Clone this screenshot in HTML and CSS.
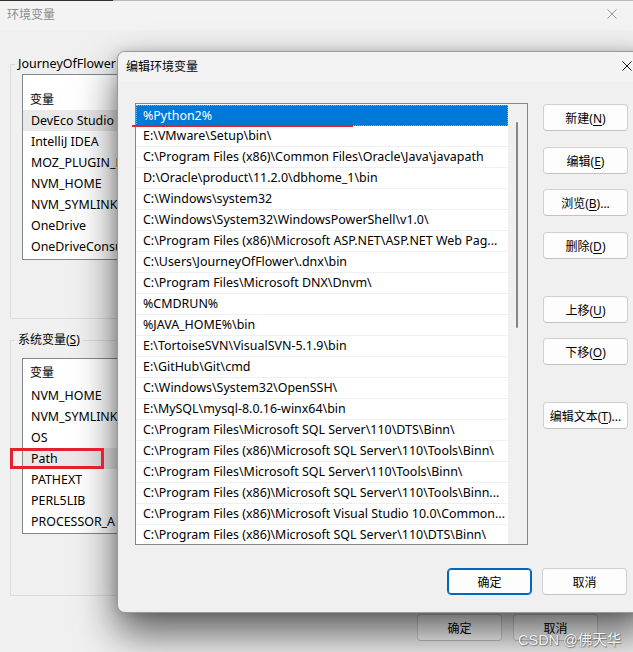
FILE: index.html
```html
<!DOCTYPE html>
<html lang="zh-CN">
<head>
<meta charset="utf-8">
<title>编辑环境变量</title>
<link rel="stylesheet" href="styles.css">
</head>
<body>
<div class="screen">
  <div class="back">
    <div class="topedge"><span class="te-dark"></span><span class="te-light"></span></div>
    <div class="back-title">
      <span class="back-title-text">环境变量</span>
      <svg class="xicon" width="10" height="10" viewBox="0 0 10 10"><path d="M0.5 0.5L9.5 9.5M9.5 0.5L0.5 9.5" stroke="#9a9a9a" stroke-width="1" fill="none"/></svg>
    </div>
    <div class="back-body">
      <fieldset class="group g-user">
        <legend class="lg-user">JourneyOfFlower</legend>
        <div class="vlist vl-user">
          <div class="vl-head vh-user">变量</div>
          <div class="vl-row hl">DevEco Studio</div>
          <div class="vl-row">IntelliJ IDEA</div>
          <div class="vl-row">MOZ_PLUGIN_P</div>
          <div class="vl-row">NVM_HOME</div>
          <div class="vl-row">NVM_SYMLINK</div>
          <div class="vl-row">OneDrive</div>
          <div class="vl-row">OneDriveConsu</div>
        </div>
      </fieldset>
      <fieldset class="group g-sys">
        <legend>系统变量(<u>S</u>)</legend>
        <div class="vlist vl-sys">
          <div class="vl-head vh-sys">变量</div>
          <div class="vl-row">NVM_HOME</div>
          <div class="vl-row">NVM_SYMLINK</div>
          <div class="vl-row">OS</div>
          <div class="vl-row hl">Path</div>
          <div class="vl-row">PATHEXT</div>
          <div class="vl-row">PERL5LIB</div>
          <div class="vl-row">PROCESSOR_A</div>
        </div>
      </fieldset>
      <div class="back-foot">
        <button class="btn bbtn-ok">确定</button>
        <button class="btn bbtn-cancel">取消</button>
      </div>
    </div>
  </div>

  <div class="dialog">
    <div class="dlg-title">
      <span>编辑环境变量</span>
      <svg class="xicon" width="10" height="10" viewBox="0 0 10 10"><path d="M0.5 0.5L9.5 9.5M9.5 0.5L0.5 9.5" stroke="#1a1a1a" stroke-width="1" fill="none"/></svg>
    </div>
    <div class="dlg-main">
      <div class="plist">
        <div class="prows">
          <div class="prow sel">%Python2%</div>
          <div class="prow">E:\VMware\Setup\bin\</div>
          <div class="prow">C:\Program Files (x86)\Common Files\Oracle\Java\javapath</div>
          <div class="prow">D:\Oracle\product\11.2.0\dbhome_1\bin</div>
          <div class="prow">C:\Windows\system32</div>
          <div class="prow">C:\Windows\System32\WindowsPowerShell\v1.0\</div>
          <div class="prow">C:\Program Files (x86)\Microsoft ASP.NET\ASP.NET Web Pag...</div>
          <div class="prow">C:\Users\JourneyOfFlower\.dnx\bin</div>
          <div class="prow">C:\Program Files\Microsoft DNX\Dnvm\</div>
          <div class="prow">%CMDRUN%</div>
          <div class="prow">%JAVA_HOME%\bin</div>
          <div class="prow">E:\TortoiseSVN\VisualSVN-5.1.9\bin</div>
          <div class="prow">E:\GitHub\Git\cmd</div>
          <div class="prow">C:\Windows\System32\OpenSSH\</div>
          <div class="prow">E:\MySQL\mysql-8.0.16-winx64\bin</div>
          <div class="prow">C:\Program Files\Microsoft SQL Server\110\DTS\Binn\</div>
          <div class="prow">C:\Program Files (x86)\Microsoft SQL Server\110\Tools\Binn\</div>
          <div class="prow">C:\Program Files\Microsoft SQL Server\110\Tools\Binn\</div>
          <div class="prow">C:\Program Files (x86)\Microsoft SQL Server\110\Tools\Binn...</div>
          <div class="prow">C:\Program Files (x86)\Microsoft Visual Studio 10.0\Common...</div>
          <div class="prow">C:\Program Files (x86)\Microsoft SQL Server\110\DTS\Binn\</div>
        </div>
        <div class="pscroll"><div class="thumb"></div></div>
      </div>
      <div class="btncol">
        <button class="btn b-new">新建(<u>N</u>)</button>
        <button class="btn b-edit">编辑(<u>E</u>)</button>
        <button class="btn b-browse">浏览(<u>B</u>)...</button>
        <button class="btn b-del">删除(<u>D</u>)</button>
        <button class="btn b-up">上移(<u>U</u>)</button>
        <button class="btn b-down">下移(<u>O</u>)</button>
        <button class="btn b-text">编辑文本(<u>T</u>)...</button>
      </div>
    </div>
    <div class="dlg-foot">
      <button class="btn primary">确定</button>
      <button class="btn">取消</button>
    </div>
  </div>

  <div class="mark-line"></div>
  <div class="mark-box"></div>
  <div class="watermark">CSDN @佛天华</div>
</div>
</body>
</html>
```
FILE: styles.css
```css
* { box-sizing: border-box; }
html, body { margin: 0; padding: 0; }
body {
  width: 633px;
  height: 652px;
  overflow: hidden;
  background: #f0f0f0;
  font-family: "Noto Sans", "Noto Sans CJK SC", sans-serif;
  font-size: 12px;
  color: #000;
}
.screen { position: relative; width: 633px; height: 652px; overflow: hidden; }

/* back window */
.back { width: 633px; height: 652px; background: #f0f0f0; }
.topedge { display: flex; height: 1px; }
.te-dark { width: 113px; background: #2e2e2e; }
.te-light { flex: 1; background: #b8b8b8; }
.back-title {
  height: 29px;
  background: #f3f3f3;
  display: flex;
  align-items: center;
  justify-content: space-between;
  padding: 0 16px 3px 7px;
  color: #8c8c8c;
}
.back-body { padding: 26px 0 0 10px; }
.group { margin: 0; padding: 0; border: 1px solid #dcdcdc; width: 620px; min-width: 0; }
.group legend { margin-left: 4px; padding: 0 3px; line-height: 16px; font-size: 12px; }
.group legend.lg-user { font-size: 12.5px; }
.g-sys { margin-top: 13px; }
.vlist { background: #fff; border: 1px solid #828790; width: 110px; }
.vl-user { height: 186px; margin: 2px 0 58px 11px; }
.vl-sys { height: 176px; margin: 10px 0 61px 11px; }
.vl-head { padding-left: 7px; line-height: 21px; }
.vh-user { padding-top: 14px; }
.vh-sys { padding-top: 3px; padding-bottom: 2px; }
.vl-row { height: 21px; line-height: 21px; padding-left: 8px; white-space: nowrap; font-size: 12.4px; }
.vl-row.hl { background: #e9e9e9; }
.back-foot { display: flex; gap: 11px; padding-left: 407px; margin-top: 18px; }
.bbtn-cancel { width: 84px; }

/* dialog */
.dialog {
  position: absolute;
  left: 117px;
  top: 51px;
  width: 533px;
  height: 562px;
  background: #f0f0f0;
  border: 1px solid #999;
  border-radius: 8px;
  box-shadow: 0 20px 40px rgba(0, 0, 0, 0.62), 0 0 12px rgba(0, 0, 0, 0.15);
  overflow: hidden;
}
.dlg-title {
  height: 29px;
  background: #f3f3f3;
  display: flex;
  align-items: center;
  justify-content: space-between;
  padding: 0 17px 1px 8px;
}
.dlg-main { display: flex; padding: 22px 0 0 17px; }
.plist { width: 393px; height: 442px; border: 1px solid #828790; background: #fff; display: flex; }
.prows { width: 372px; padding-top: 1px; overflow: hidden; }
.prow {
  height: 21px;
  border-bottom: 1px solid #efefef;
  line-height: 20px;
  padding-left: 7px;
  white-space: nowrap;
  overflow: hidden;
  font-size: 12.45px;
}
.prow.sel {
  background: #0078d7;
  color: #fff;
  border: 1px dotted #ff8728;
  line-height: 19px;
  padding-left: 6px;
}
.pscroll { width: 19px; background: #f0f0f0; padding: 18px 0 0 8px; }
.thumb { width: 2px; height: 206px; background: #858585; border-radius: 1px; }

.btncol { display: flex; flex-direction: column; margin-left: 15px; padding-top: 1px; }
.b-edit { margin-top: 16px; }
.b-browse { margin-top: 15px; }
.b-del { margin-top: 16px; }
.b-up { margin-top: 37px; }
.b-down { margin-top: 15px; }
.b-text { margin-top: 37px; }

.btn {
  width: 85px;
  height: 27px;
  background: #fdfdfd;
  border: 1px solid #d0d0d0;
  border-bottom-color: #c2c2c2;
  border-radius: 4px;
  font-family: "Noto Sans", "Noto Sans CJK SC", sans-serif;
  font-size: 12px;
  color: #000;
  padding: 0;
  white-space: nowrap;
}
.btn u { text-underline-offset: 2px; }
.btn.primary { border: 1px solid #0067c0; box-shadow: inset 0 0 0 1px #0067c0; }
.dlg-foot { display: flex; gap: 10px; padding-left: 329px; margin-top: 23px; }

/* annotations */
.mark-line { position: absolute; left: 132px; top: 125px; width: 221px; height: 2px; background: #e3222c; }
.mark-box { position: absolute; left: 10px; top: 448px; width: 94px; height: 21px; border: 3px solid #e3222c; }
.watermark {
  position: absolute;
  left: 518px;
  top: 631px;
  font-family: "Liberation Sans", "Noto Sans CJK SC", sans-serif;
  font-size: 14.5px;
  line-height: 18px;
  color: #f6f6f6;
  text-shadow: 0 0 1px #555, 1px 1px 1px rgba(0,0,0,0.35);
  white-space: nowrap;
}
```
